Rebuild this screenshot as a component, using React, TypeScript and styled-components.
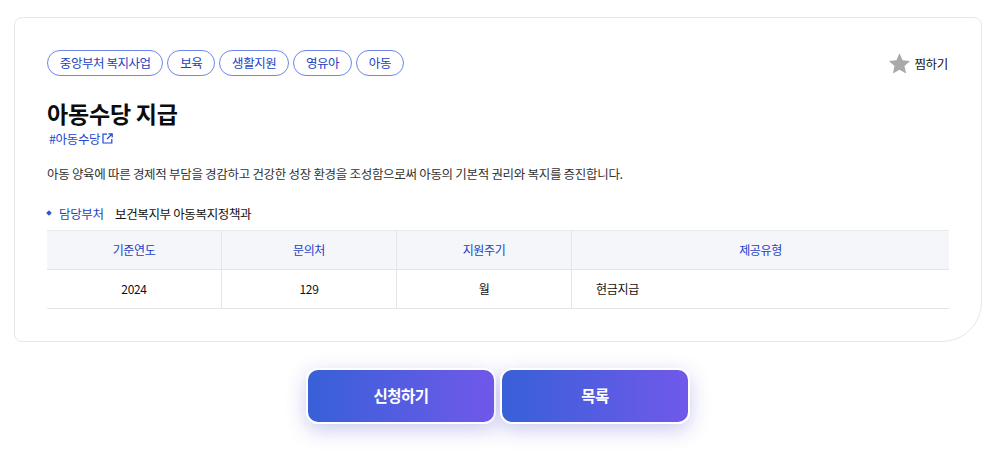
import styled, { createGlobalStyle } from "styled-components";

const GlobalStyle = createGlobalStyle`
html, body {
  margin: 0;
  padding: 0;
  background: #fff;
  font-family: "Noto Sans CJK KR", "Noto Sans", sans-serif;
  color: #111;
}
* { box-sizing: border-box; }
`;

const Page = styled.div`
  width: 1000px;
  height: 457px;
  padding: 17px 18px 0 14px;
  overflow: hidden;
`;

const Card = styled.section`
  height: 325px;
  border: 1px solid #e6e7ea;
  border-radius: 8px 8px 40px 8px;
  padding: 32px 32px 0;
`;

const TopRow = styled.div`
  display: flex;
  justify-content: space-between;
  align-items: center;
  height: 26px;
`;

const Tags = styled.div`
  display: flex;
  gap: 4px;
`;

const Tag = styled.span`
  height: 26px;
  padding: 0 11.85px;
  border: 1px solid #6f86ea;
  border-radius: 13px;
  font-size: 12.5px;
  line-height: 23px;
  letter-spacing: -0.45px;
  color: #1c3fc6;
  background: #fff;
  white-space: nowrap;
`;

const Bookmark = styled.button`
  display: flex;
  align-items: center;
  gap: 3px;
  padding: 0;
  margin-right: 1px;
  border: none;
  background: none;
  font: inherit;
  font-size: 12.5px;
  letter-spacing: -0.3px;
  color: #111;
`;

const Title = styled.h1`
  margin: 21px 0 0;
  font-size: 23px;
  line-height: 32px;
  font-weight: 700;
  letter-spacing: -0.2px;
  color: #0c0c0c;
`;

const HashLink = styled.a`
  display: flex;
  align-items: center;
  gap: 2px;
  margin: -1px 0 0 2px;
  height: 20px;
  font-size: 12.5px;
  letter-spacing: -0.35px;
  color: #1f47d6;
`;

const Description = styled.p`
  margin: 16px 0 0;
  font-size: 12.5px;
  line-height: 20px;
  letter-spacing: -0.3px;
  color: #333;
`;

const Department = styled.div`
  display: flex;
  align-items: center;
  height: 20px;
  margin-top: 19px;
  font-size: 12.5px;
  letter-spacing: -0.35px;
`;

const Dot = styled.i`
  width: 4px;
  height: 4px;
  margin-right: 8px;
  transform: rotate(45deg);
  background: #2f56d9;
`;

const DepartmentLabel = styled.span`
  width: 56px;
  color: #1c3fc6;
`;

const DepartmentValue = styled.span`
  color: #111;
`;

const Table = styled.div`
  display: grid;
  grid-template-columns: 175px 175px 175px 1fr;
  margin-top: 7px;
  border-top: 1px solid #e8e9ec;
`;

const HeadCell = styled.div`
  height: 39px;
  padding-bottom: 2px;
  display: flex;
  align-items: center;
  justify-content: center;
  font-size: 12px;
  letter-spacing: -0.4px;
  color: #1c3fc6;
  background: #f5f6fa;
  border-bottom: 1px solid #e4e5e9;
  border-right: 1px solid #e4e5e9;
  &:nth-child(4n) { border-right: none; }
`;

const BodyCell = styled.div<{ $left?: boolean }>`
  height: 39px;
  padding-bottom: 2px;
  display: flex;
  align-items: center;
  justify-content: ${(p) => (p.$left ? "flex-start" : "center")};
  padding-left: ${(p) => (p.$left ? "24px" : "0")};
  font-size: 12px;
  letter-spacing: -0.3px;
  color: #111;
  border-bottom: 1px solid #e4e5e9;
  border-right: ${(p) => (p.$left ? "none" : "1px solid #e4e5e9")};
`;

const Actions = styled.div`
  display: flex;
  justify-content: center;
  gap: 4px;
  margin-top: 26px;
`;

const ActionButton = styled.button`
  width: 190px;
  height: 56px;
  padding: 0 0 3px;
  border: 2px solid #fff;
  border-radius: 12px;
  background: linear-gradient(90deg, #3860d8 0%, #7059ea 100%);
  box-shadow: 0 6px 20px rgba(84, 78, 205, 0.3);
  font-family: inherit;
  font-size: 15.5px;
  font-weight: 700;
  letter-spacing: -0.45px;
  color: #fff;
`;

const tags = ["중앙부처 복지사업", "보육", "생활지원", "영유아", "아동"];

function App() {
  return (
    <Page>
      <GlobalStyle />
      <Card>
        <TopRow>
          <Tags>
            {tags.map((t) => (
              <Tag key={t}>{t}</Tag>
            ))}
          </Tags>
          <Bookmark>
            <svg width="23" height="23" viewBox="0 0 24 24">
              <path
                d="M12 1.2l3.2 7.3 7.9.8-5.9 5.3 1.7 7.8L12 18.4l-6.9 4 1.7-7.8L.9 9.3l7.9-.8z"
                fill="#a9a9a9"
              />
            </svg>
            찜하기
          </Bookmark>
        </TopRow>
        <Title>아동수당 지급</Title>
        <HashLink>
          #아동수당
          <svg width="11" height="11" viewBox="0 0 11 11" fill="none" stroke="#1f47d6" strokeWidth="1.2">
            <path d="M5 1.2H1v8.8h8.8V6" />
            <path d="M6.5.8h3.7v3.7M10 1L5 6" />
          </svg>
        </HashLink>
        <Description>
          아동 양육에 따른 경제적 부담을 경감하고 건강한 성장 환경을 조성함으로써 아동의 기본적 권리와 복지를 증진합니다.
        </Description>
        <Department>
          <Dot />
          <DepartmentLabel>담당부처</DepartmentLabel>
          <DepartmentValue>보건복지부 아동복지정책과</DepartmentValue>
        </Department>
        <Table>
          <HeadCell>기준연도</HeadCell>
          <HeadCell>문의처</HeadCell>
          <HeadCell>지원주기</HeadCell>
          <HeadCell>제공유형</HeadCell>
          <BodyCell>2024</BodyCell>
          <BodyCell>129</BodyCell>
          <BodyCell>월</BodyCell>
          <BodyCell $left>현금지급</BodyCell>
        </Table>
      </Card>
      <Actions>
        <ActionButton>신청하기</ActionButton>
        <ActionButton>목록</ActionButton>
      </Actions>
    </Page>
  );
}

export default App;
